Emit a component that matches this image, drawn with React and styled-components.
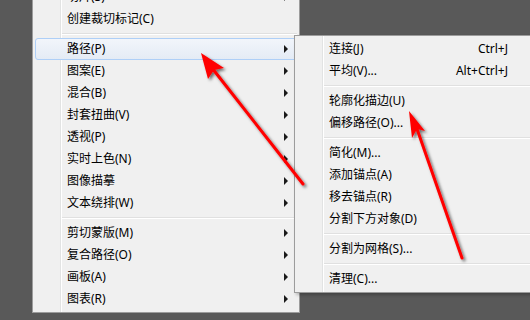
import styled, { createGlobalStyle } from "styled-components";

const GlobalStyle = createGlobalStyle`
  html, body {
    margin: 0;
    padding: 0;
    background: #595959;
  }
  body {
    font-family: "Noto Sans", "Noto Sans CJK SC", sans-serif;
    font-size: 12px;
  }
`;

const objectMenu = [
  { label: "切片(S)", sub: true },
  { label: "创建裁切标记(C)" },
  { sep: true },
  { label: "路径(P)", sub: true, active: true },
  { label: "图案(E)", sub: true },
  { label: "混合(B)", sub: true },
  { label: "封套扭曲(V)", sub: true },
  { label: "透视(P)", sub: true },
  { label: "实时上色(N)", sub: true },
  { label: "图像描摹", sub: true },
  { label: "文本绕排(W)", sub: true },
  { sep: true },
  { label: "剪切蒙版(M)", sub: true },
  { label: "复合路径(O)", sub: true },
  { label: "画板(A)", sub: true },
  { label: "图表(R)", sub: true },
];

const pathMenu = [
  { label: "连接(J)", key: "Ctrl+J" },
  { label: "平均(V)...", key: "Alt+Ctrl+J" },
  { sep: true },
  { label: "轮廓化描边(U)" },
  { label: "偏移路径(O)..." },
  { sep: true },
  { label: "简化(M)..." },
  { label: "添加锚点(A)" },
  { label: "移去锚点(R)" },
  { label: "分割下方对象(D)" },
  { sep: true },
  { label: "分割为网格(S)..." },
  { sep: true },
  { label: "清理(C)..." },
];

function MenuList({ items }) {
  return items.map((item, i) =>
    item.sep ? (
      <Separator key={i} />
    ) : (
      <Item key={i} $active={item.active}>
        <Label>{item.label}</Label>
        {item.key && <Shortcut>{item.key}</Shortcut>}
        {item.sub && <SubArrow />}
      </Item>
    )
  );
}

function Arrows() {
  return (
    <Overlay width="530" height="320" viewBox="0 0 530 320">
      <defs>
        <filter id="shadow" x="-20%" y="-20%" width="140%" height="140%">
          <feDropShadow dx="2" dy="2" stdDeviation="1.6" floodColor="#000" floodOpacity="0.55" />
        </filter>
      </defs>
      <g filter="url(#shadow)" fill="#ff0000" stroke="#ff0000">
        <line x1="303" y1="184" x2="212" y2="68" strokeWidth="3" strokeLinecap="round" />
        <polygon points="201,53 224,68 214,70 208,79" stroke="none" />
        <line x1="462" y1="258" x2="416" y2="126" strokeWidth="3" strokeLinecap="round" />
        <polygon points="409,111 425,131 417,129 412,138" stroke="none" />
      </g>
    </Overlay>
  );
}

export default function App() {
  return (
    <>
      <GlobalStyle />
      <Stage>
        <Menu>
          <MenuList items={objectMenu} />
        </Menu>
        <SubMenu>
          <MenuList items={pathMenu} />
        </SubMenu>
        <Arrows />
      </Stage>
    </>
  );
}

const Stage = styled.div`
  position: relative;
  width: 530px;
  height: 320px;
  overflow: hidden;
  background: #595959;
`;

const Menu = styled.div`
  width: 262px;
  margin-left: 32px;
  margin-top: -17px;
  padding: 2px;
  border: 1px solid #9c9c9c;
  background: linear-gradient(
      to right,
      transparent 27px,
      #e2e3e3 27px,
      #e2e3e3 28px,
      #ffffff 28px,
      #ffffff 29px,
      transparent 29px
    ),
    #f0f0f0;
`;

const SubMenu = styled(Menu)`
  position: absolute;
  left: 294px;
  top: 35px;
  width: 244px;
  margin: 0;
  box-shadow: 2px 2px 3px rgba(0, 0, 0, 0.25);
`;

const Item = styled.div`
  position: relative;
  display: flex;
  align-items: center;
  height: 22px;
  padding: 0 32px 0 31px;
  box-sizing: border-box;
  color: #000;
  line-height: 22px;
  border: 1px solid ${(p) => (p.$active ? "#aecff7" : "transparent")};
  border-radius: 3px;
  background: ${(p) =>
    p.$active ? "linear-gradient(to bottom, #f2f5fb, #e4ebf5)" : "transparent"};
`;

const Label = styled.span`
  white-space: nowrap;
`;

const Shortcut = styled.span`
  margin-left: auto;
  white-space: nowrap;
`;

const SubArrow = styled.i`
  position: absolute;
  right: 8px;
  top: 6px;
  width: 0;
  height: 0;
  border-top: 4px solid transparent;
  border-bottom: 4px solid transparent;
  border-left: 4px solid #1a1a1a;
`;

const Separator = styled.div`
  height: 8px;
  margin-left: 27px;
  background: linear-gradient(
    to bottom,
    transparent 3px,
    #e0e0e0 3px,
    #e0e0e0 4px,
    #ffffff 4px,
    #ffffff 5px,
    transparent 5px
  );
`;

const Overlay = styled.svg`
  position: absolute;
  left: 0;
  top: 0;
  pointer-events: none;
`;
